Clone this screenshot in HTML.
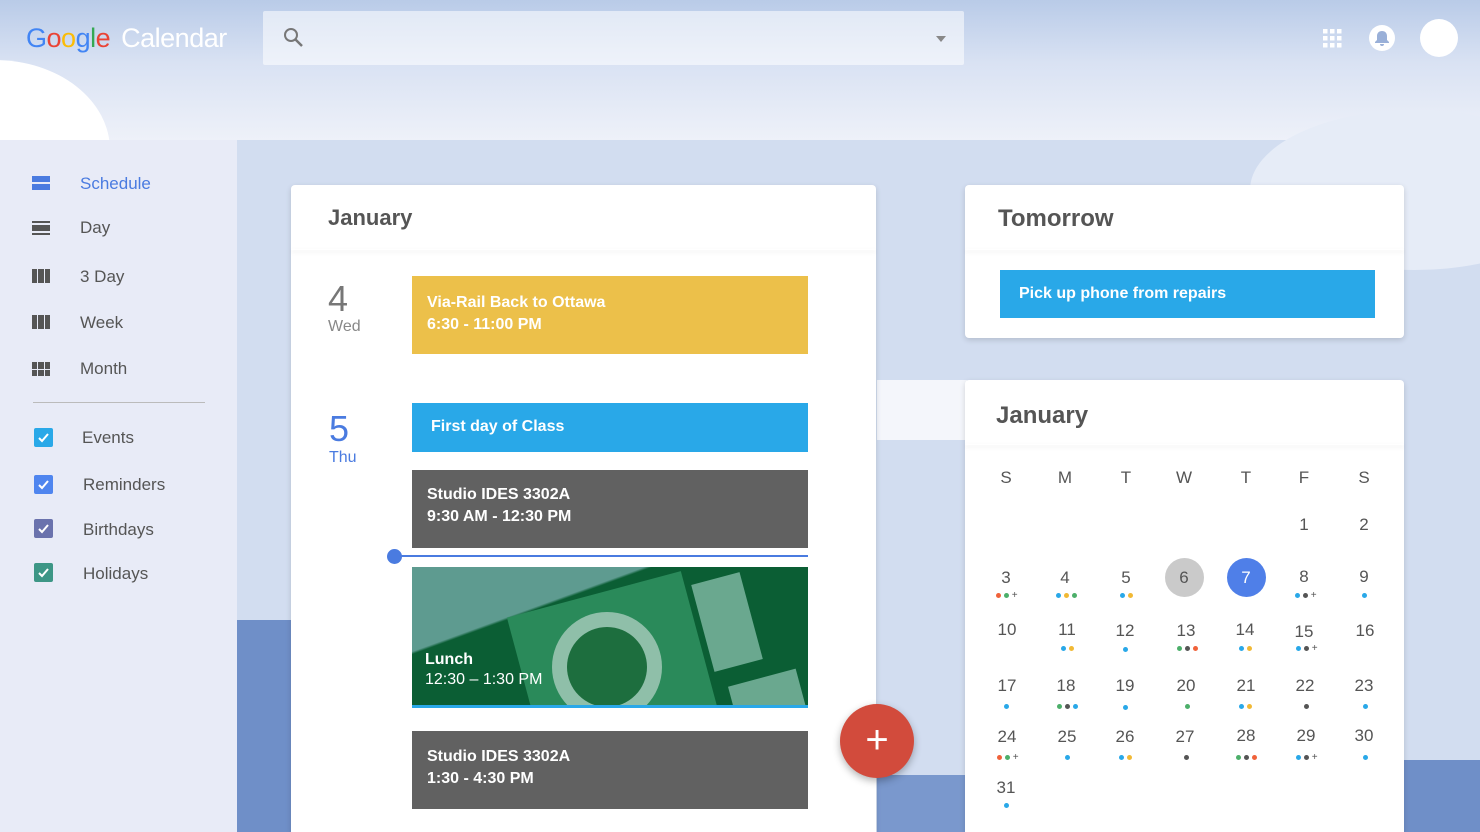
<!DOCTYPE html>
<html style="width:1480px;height:832px;overflow:hidden"><head><meta charset="utf-8"><style>
*{margin:0;padding:0;box-sizing:border-box}
body{width:1480px;height:832px;overflow:hidden;position:relative;font-family:"Liberation Sans",sans-serif;background:#d2ddf0}
.a{position:absolute}
.side{left:0;top:140px;width:237px;height:692px;background:#e8ebf7}
.nav{left:80px;font-size:17px;color:#555}
.ic{left:32px;width:18px;height:14px}
.cb{left:34px;width:19px;height:19px;border-radius:2px}
.cb svg{position:absolute;left:2px;top:2px}
.card{background:#fff;box-shadow:0 2px 6px rgba(0,0,0,.15)}
.ev{color:#fff;font-weight:bold;font-size:16px;line-height:22px;padding:15px 15px}
.cal{font-size:17px;color:#555;text-align:center;width:50px}
.dots{width:50px;text-align:center;font-size:0;height:6px}
.d{display:inline-block;width:5px;height:5px;border-radius:50%;margin:0 1.5px;vertical-align:top}
.b{background:#29a8e8}.y{background:#f1b935}.g{background:#4caf6a}.k{background:#555}.r{background:#f0623a}
.p{display:inline-block;font-size:10px;line-height:5px;color:#555;margin-left:1px;vertical-align:top}
</style></head><body>
<div class="a" style="left:0;top:0;width:1480px;height:140px;background:linear-gradient(180deg,#b9cbe8 0%,#d9e2f3 45%,#eef1f9 100%)"></div>
<div class="a" style="left:-120px;top:60px;width:230px;height:180px;border-radius:50%;background:#fff"></div>
<div class="a" style="left:1250px;top:110px;width:330px;height:160px;border-radius:50%;background:#e6ecf7"></div>
<div class="a" style="left:877px;top:380px;width:90px;height:60px;background:#f4f6fb"></div>
<div class="a" style="left:237px;top:620px;width:54px;height:212px;background:#6f8fc8"></div>
<div class="a" style="left:1404px;top:760px;width:76px;height:72px;background:#6f8fc8"></div>
<div class="a" style="left:877px;top:775px;width:88px;height:57px;background:#7a98cd"></div>
<div class="a" style="left:26px;top:23px;font-size:27px;letter-spacing:-0.5px"><span style="color:#4285f4">G</span><span style="color:#ea4335">o</span><span style="color:#fbbc05">o</span><span style="color:#4285f4">g</span><span style="color:#34a853">l</span><span style="color:#ea4335">e</span> <span style="color:#fff;margin-left:4px">Calendar</span></div>
<div class="a" style="left:263px;top:11px;width:701px;height:54px;background:rgba(255,255,255,.55);border-radius:2px"></div>
<svg class="a" style="left:283px;top:27px" width="22" height="22"><circle cx="8" cy="8" r="6" fill="none" stroke="#777" stroke-width="2"/><path d="M12.5 12.5L19 19" stroke="#777" stroke-width="2.5"/></svg>
<div class="a" style="left:936px;top:36px;border:5px solid transparent;border-top:6px solid #888"></div>
<svg class="a" style="left:1323px;top:29px" width="20" height="20" fill="#fff"><rect x="0" y="0" width="4.5" height="4.5"/><rect x="7" y="0" width="4.5" height="4.5"/><rect x="14" y="0" width="4.5" height="4.5"/><rect x="0" y="7" width="4.5" height="4.5"/><rect x="7" y="7" width="4.5" height="4.5"/><rect x="14" y="7" width="4.5" height="4.5"/><rect x="0" y="14" width="4.5" height="4.5"/><rect x="7" y="14" width="4.5" height="4.5"/><rect x="14" y="14" width="4.5" height="4.5"/></svg>
<div class="a" style="left:1369px;top:25px;width:26px;height:26px;border-radius:50%;background:#fff"></div>
<svg class="a" style="left:1373px;top:29px" width="18" height="18"><path d="M9 2c-3 0-5 2-5 5v4l-2 2v1h14v-1l-2-2V7c0-3-2-5-5-5z M7 15a2 2 0 0 0 4 0z" fill="#9ab0d8"/></svg>
<div class="a" style="left:1420px;top:19px;width:38px;height:38px;border-radius:50%;background:#fff"></div>

<div class="a side"></div>
<div class="a ic" style="top:176px"><div style="height:6px;background:#4a7be0"></div><div style="height:6px;margin-top:2px;background:#4a7be0"></div></div>
<div class="a nav" style="top:174px;color:#4a7be0">Schedule</div>
<div class="a ic" style="top:221px"><div style="height:2px;background:#555"></div><div style="height:6px;margin-top:2px;background:#555"></div><div style="height:2px;margin-top:2px;background:#555"></div></div>
<div class="a nav" style="top:218px">Day</div>
<div class="a ic" style="top:269px;display:flex;gap:1px"><div style="flex:1;background:#555"></div><div style="flex:1;background:#555"></div><div style="flex:1;background:#555"></div></div>
<div class="a nav" style="top:267px">3 Day</div>
<div class="a ic" style="top:315px;display:flex;gap:1px"><div style="flex:1;background:#555"></div><div style="flex:1;background:#555"></div><div style="flex:1;background:#555"></div></div>
<div class="a nav" style="top:313px">Week</div>
<div class="a ic" style="top:362px;display:grid;grid-template-columns:1fr 1fr 1fr;gap:1px"><div style="background:#555"></div><div style="background:#555"></div><div style="background:#555"></div><div style="background:#555"></div><div style="background:#555"></div><div style="background:#555"></div></div>
<div class="a nav" style="top:359px">Month</div>
<div class="a" style="left:33px;top:402px;width:172px;height:1px;background:#bbb"></div>
<div class="a cb" style="top:428px;background:#29a8e8"><svg width="15" height="15"><path d="M3 8l3 3 6-7" stroke="#fff" stroke-width="2" fill="none"/></svg></div>
<div class="a nav" style="top:428px;left:82px">Events</div>
<div class="a cb" style="top:475px;background:#4f85ef"><svg width="15" height="15"><path d="M3 8l3 3 6-7" stroke="#fff" stroke-width="2" fill="none"/></svg></div>
<div class="a nav" style="top:475px;left:83px">Reminders</div>
<div class="a cb" style="top:519px;background:#6a72ad"><svg width="15" height="15"><path d="M3 8l3 3 6-7" stroke="#fff" stroke-width="2" fill="none"/></svg></div>
<div class="a nav" style="top:520px;left:83px">Birthdays</div>
<div class="a cb" style="top:563px;background:#3d9686"><svg width="15" height="15"><path d="M3 8l3 3 6-7" stroke="#fff" stroke-width="2" fill="none"/></svg></div>
<div class="a nav" style="top:564px;left:83px">Holidays</div>

<div class="a card" style="left:291px;top:185px;width:585px;height:647px;border-radius:4px 4px 0 0"></div>
<div class="a" style="left:291px;top:249px;width:585px;height:1px;box-shadow:0 2px 4px rgba(0,0,0,.12)"></div>
<div class="a" style="left:328px;top:205px;font-size:22px;font-weight:bold;color:#555">January</div>
<div class="a" style="left:328px;top:278px;font-size:36px;color:#777">4</div>
<div class="a" style="left:328px;top:318px;font-size:16px;color:#888">Wed</div>
<div class="a ev" style="left:412px;top:276px;width:396px;height:78px;background:#ecc04a;padding-top:16px">Via-Rail Back to Ottawa<br>6:30 - 11:00 PM</div>
<div class="a" style="left:329px;top:408px;font-size:36px;color:#4a7be0">5</div>
<div class="a" style="left:329px;top:449px;font-size:16px;color:#4a7be0">Thu</div>
<div class="a ev" style="left:412px;top:403px;width:396px;height:49px;background:#29a8e8;padding:13px 19px">First day of Class</div>
<div class="a ev" style="left:412px;top:470px;width:396px;height:78px;background:#616161;padding-top:14px">Studio IDES 3302A<br>9:30 AM - 12:30 PM</div>
<div class="a" style="left:395px;top:555px;width:413px;height:2px;background:#4a7be0"></div>
<div class="a" style="left:387px;top:549px;width:15px;height:15px;border-radius:50%;background:#4a7be0"></div>
<div class="a" style="left:412px;top:567px;width:396px;height:141px;background:linear-gradient(160deg,#5e9b90 0%,#5e9b90 30%,#0b5e34 31%,#0b5e34 100%);border-bottom:3px solid #29a8e8;overflow:hidden">
<div class="a" style="left:110px;top:25px;width:180px;height:140px;background:#2a8a5a;transform:rotate(-15deg)"></div>
<div class="a" style="left:140px;top:45px;width:110px;height:110px;border-radius:50%;background:#8fbfa9"></div>
<div class="a" style="left:155px;top:60px;width:80px;height:80px;border-radius:50%;background:#1d6e3e"></div>
<div class="a" style="left:290px;top:10px;width:50px;height:90px;background:#6aa88f;transform:rotate(-15deg)"></div>
<div class="a" style="left:320px;top:110px;width:70px;height:40px;background:#6aa88f;transform:rotate(-15deg)"></div>
</div>
<div class="a" style="left:425px;top:650px;color:#fff;font-size:16px;line-height:20px"><b>Lunch</b><br>12:30 – 1:30 PM</div>
<div class="a ev" style="left:412px;top:731px;width:396px;height:78px;background:#616161;padding-top:15px">Studio IDES 3302A<br>1:30 - 4:30 PM</div>
<div class="a" style="left:840px;top:704px;width:74px;height:74px;border-radius:50%;background:#d24b3c;box-shadow:0 3px 8px rgba(0,0,0,.3);color:#fff;font-size:40px;text-align:center;line-height:72px">+</div>

<div class="a card" style="left:965px;top:185px;width:439px;height:153px;border-radius:4px"></div>
<div class="a" style="left:965px;top:249px;width:439px;height:1px;box-shadow:0 2px 4px rgba(0,0,0,.12)"></div>
<div class="a" style="left:998px;top:205px;font-size:24px;font-weight:bold;color:#555">Tomorrow</div>
<div class="a ev" style="left:1000px;top:270px;width:375px;height:48px;background:#29a8e8;padding:13px 19px">Pick up phone from repairs</div>

<div class="a card" style="left:965px;top:380px;width:439px;height:452px;border-radius:4px 4px 0 0"></div>
<div class="a" style="left:965px;top:444px;width:439px;height:1px;box-shadow:0 2px 4px rgba(0,0,0,.12)"></div>
<div class="a" style="left:996px;top:402px;font-size:24px;font-weight:bold;color:#555">January</div>
<div class="a" style="left:1165px;top:558px;width:39px;height:39px;border-radius:50%;background:#cacaca"></div>
<div class="a" style="left:1227px;top:558px;width:39px;height:39px;border-radius:50%;background:#4f7fe8"></div>

<div class="a cal" style="left:981px;top:468px">S</div><div class="a cal" style="left:1040px;top:468px">M</div><div class="a cal" style="left:1101px;top:468px">T</div><div class="a cal" style="left:1159px;top:468px">W</div><div class="a cal" style="left:1221px;top:468px">T</div><div class="a cal" style="left:1279px;top:468px">F</div><div class="a cal" style="left:1339px;top:468px">S</div>

<div class="a cal" style="left:1279px;top:515px">1</div><div class="a cal" style="left:1339px;top:515px">2</div>

<div class="a cal" style="left:981px;top:568px">3</div><div class="a dots" style="left:981px;top:593px"><i class="d r"></i><i class="d g"></i><i class="p">+</i></div>
<div class="a cal" style="left:1040px;top:568px">4</div><div class="a dots" style="left:1041px;top:593px"><i class="d b"></i><i class="d y"></i><i class="d g"></i></div>
<div class="a cal" style="left:1101px;top:568px">5</div><div class="a dots" style="left:1101px;top:593px"><i class="d b"></i><i class="d y"></i></div>
<div class="a cal" style="left:1159px;top:568px">6</div>
<div class="a cal" style="left:1221px;top:568px;color:#fff">7</div>
<div class="a cal" style="left:1279px;top:567px">8</div><div class="a dots" style="left:1280px;top:593px"><i class="d b"></i><i class="d k"></i><i class="p">+</i></div>
<div class="a cal" style="left:1339px;top:567px">9</div><div class="a dots" style="left:1339px;top:593px"><i class="d b"></i></div>

<div class="a cal" style="left:982px;top:620px">10</div>
<div class="a cal" style="left:1042px;top:620px">11</div><div class="a dots" style="left:1042px;top:646px"><i class="d b"></i><i class="d y"></i></div>
<div class="a cal" style="left:1100px;top:621px">12</div><div class="a dots" style="left:1100px;top:647px"><i class="d b"></i></div>
<div class="a cal" style="left:1161px;top:621px">13</div><div class="a dots" style="left:1162px;top:646px"><i class="d g"></i><i class="d k"></i><i class="d r"></i></div>
<div class="a cal" style="left:1220px;top:620px">14</div><div class="a dots" style="left:1220px;top:646px"><i class="d b"></i><i class="d y"></i></div>
<div class="a cal" style="left:1279px;top:622px">15</div><div class="a dots" style="left:1281px;top:646px"><i class="d b"></i><i class="d k"></i><i class="p">+</i></div>
<div class="a cal" style="left:1340px;top:621px">16</div>

<div class="a cal" style="left:982px;top:676px">17</div><div class="a dots" style="left:981px;top:704px"><i class="d b"></i></div>
<div class="a cal" style="left:1041px;top:676px">18</div><div class="a dots" style="left:1042px;top:704px"><i class="d g"></i><i class="d k"></i><i class="d b"></i></div>
<div class="a cal" style="left:1100px;top:676px">19</div><div class="a dots" style="left:1100px;top:705px"><i class="d b"></i></div>
<div class="a cal" style="left:1161px;top:676px">20</div><div class="a dots" style="left:1162px;top:704px"><i class="d g"></i></div>
<div class="a cal" style="left:1221px;top:676px">21</div><div class="a dots" style="left:1220px;top:704px"><i class="d b"></i><i class="d y"></i></div>
<div class="a cal" style="left:1280px;top:676px">22</div><div class="a dots" style="left:1281px;top:704px"><i class="d k"></i></div>
<div class="a cal" style="left:1339px;top:676px">23</div><div class="a dots" style="left:1340px;top:704px"><i class="d b"></i></div>

<div class="a cal" style="left:982px;top:727px">24</div><div class="a dots" style="left:982px;top:755px"><i class="d r"></i><i class="d g"></i><i class="p">+</i></div>
<div class="a cal" style="left:1042px;top:727px">25</div><div class="a dots" style="left:1042px;top:755px"><i class="d b"></i></div>
<div class="a cal" style="left:1100px;top:727px">26</div><div class="a dots" style="left:1100px;top:755px"><i class="d b"></i><i class="d y"></i></div>
<div class="a cal" style="left:1160px;top:727px">27</div><div class="a dots" style="left:1161px;top:755px"><i class="d k"></i></div>
<div class="a cal" style="left:1221px;top:726px">28</div><div class="a dots" style="left:1221px;top:755px"><i class="d g"></i><i class="d k"></i><i class="d r"></i></div>
<div class="a cal" style="left:1281px;top:726px">29</div><div class="a dots" style="left:1281px;top:755px"><i class="d b"></i><i class="d k"></i><i class="p">+</i></div>
<div class="a cal" style="left:1339px;top:726px">30</div><div class="a dots" style="left:1340px;top:755px"><i class="d b"></i></div>
<div class="a cal" style="left:981px;top:778px">31</div><div class="a dots" style="left:981px;top:803px"><i class="d b"></i></div>
</body></html>
